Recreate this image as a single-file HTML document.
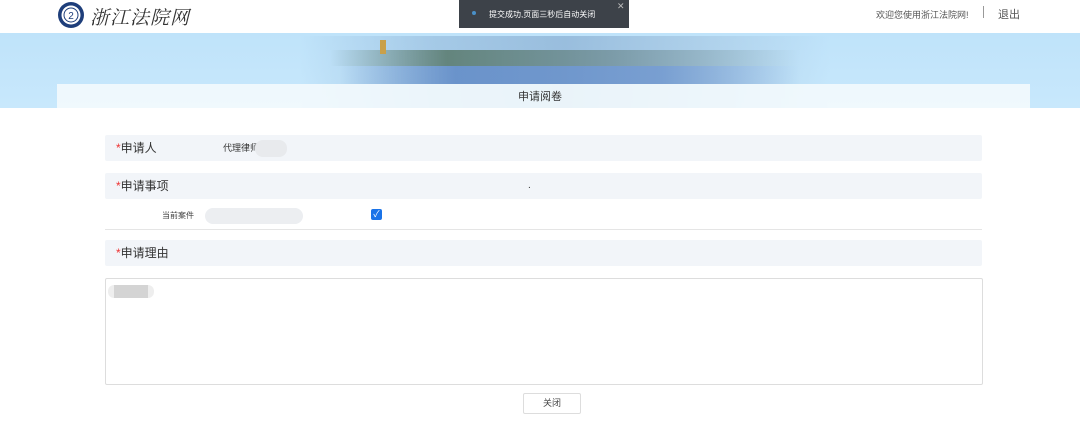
<!DOCTYPE html>
<html><head><meta charset="utf-8"><style>
*{margin:0;padding:0;box-sizing:border-box}
body{width:1080px;height:430px;background:#fff;font-family:"Liberation Sans","Noto Sans CJK SC",sans-serif;position:relative;overflow:hidden;color:#333}
.a{position:absolute;white-space:nowrap}
.row{position:absolute;left:105px;width:877px;height:26px;background:#f2f5f9;border-radius:2px;font-size:12px;line-height:26px;padding-left:11px;color:#333}
.row b{color:#e33;font-weight:normal}
</style></head><body>
<svg class="a" style="left:57px;top:1px" width="28" height="28" viewBox="0 0 28 28"><circle cx="14" cy="14" r="13" fill="#1e3e7a"/><circle cx="14" cy="14" r="9.5" fill="#fff"/><circle cx="14" cy="14" r="7" fill="none" stroke="#1e3e7a" stroke-width="1"/><text x="14" y="18" font-size="10" text-anchor="middle" fill="#1e3e7a" font-family="Liberation Sans">2</text></svg>
<div class="a" style="left:90px;top:3px;font-size:19px;font-family:'Noto Serif CJK SC',serif;color:#333;letter-spacing:1px;font-style:italic">浙江法院网</div>
<div class="a" style="left:876px;top:8px;font-size:9px;color:#555">欢迎您使用浙江法院网!</div>
<div class="a" style="left:983px;top:6px;width:1px;height:12px;background:#999"></div>
<div class="a" style="left:998px;top:6px;font-size:11px;color:#555">退出</div>
<div class="a" style="left:459px;top:0;width:170px;height:28px;background:#3d4249;color:#fff;font-size:8px">
<div class="a" style="left:13px;top:11px;width:4px;height:4px;border-radius:50%;background:#4a90c8"></div>
<div class="a" style="left:30px;top:9px">提交成功,页面三秒后自动关闭</div>
<div class="a" style="left:158px;top:1px;font-size:9px;color:#bbb">✕</div></div>
<div class="a" style="left:0;top:33px;width:1080px;height:75px;background:linear-gradient(#bfe3fa,#c8e8fc)"></div>
<div class="a" style="left:300px;top:36px;width:530px;height:72px;background:linear-gradient(90deg,rgba(200,230,250,0),rgba(158,195,226,.8) 25%,rgba(143,180,214,.8) 50%,rgba(169,203,230,.8) 75%,rgba(200,230,250,0))"></div>
<div class="a" style="left:330px;top:50px;width:470px;height:16px;background:linear-gradient(90deg,rgba(80,110,90,0),rgba(78,110,90,.75) 25%,rgba(108,138,144,.7) 60%,rgba(120,150,170,0))"></div>
<div class="a" style="left:340px;top:66px;width:460px;height:18px;background:linear-gradient(90deg,rgba(90,130,190,0),rgba(92,134,196,.8) 25%,rgba(109,148,204,.8) 70%,rgba(120,160,210,0))"></div>
<div class="a" style="left:380px;top:40px;width:6px;height:14px;background:#c9a04a"></div>
<div class="a" style="left:57px;top:84px;width:973px;height:24px;background:rgba(245,250,253,0.88)"></div>
<div class="a" style="left:0;top:84px;width:1080px;text-align:center;font-size:11px;line-height:26px;color:#333">申请阅卷</div>
<div class="row" style="top:135px"><b>*</b>申请人<span class="a" style="left:118px;top:0;font-size:9px">代理律师</span><span class="a" style="left:150px;top:5px;width:32px;height:17px;background:#e8eaed;border-radius:8px"></span></div>
<div class="row" style="top:173px"><b>*</b>申请事项<span class="a" style="left:423px;top:0;font-size:10px">.</span></div>
<div class="a" style="left:162px;top:210px;font-size:8px;color:#444">当前案件</div>
<div class="a" style="left:205px;top:208px;width:98px;height:16px;background:#eceef1;border-radius:8px"></div>
<div class="a" style="left:371px;top:209px;width:11px;height:11px;background:#1a73e8;border-radius:2px;color:#fff;font-size:9px;line-height:11px;text-align:center">✓</div>
<div class="a" style="left:105px;top:229px;width:877px;height:1px;background:#e5e5e5"></div>
<div class="row" style="top:240px"><b>*</b>申请理由</div>
<div class="a" style="left:105px;top:278px;width:878px;height:107px;border:1px solid #ddd;border-radius:2px"></div>
<div class="a" style="left:108px;top:285px;width:46px;height:13px;background:#eee;border-radius:6px"></div>
<div class="a" style="left:114px;top:285px;width:34px;height:13px;background:#d4d4d4"></div>
<div class="a" style="left:523px;top:393px;width:58px;height:21px;border:1px solid #ddd;border-radius:2px;font-size:9px;text-align:center;line-height:19px;color:#444">关闭</div>
</body></html>
